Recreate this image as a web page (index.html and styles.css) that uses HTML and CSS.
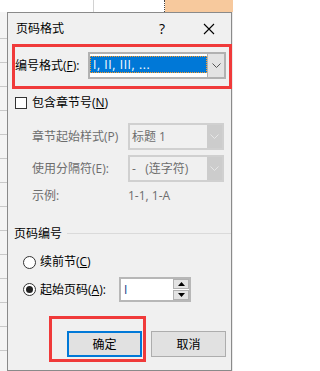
FILE: index.html
```html
<!DOCTYPE html>
<html>
<head>
<meta charset="utf-8">
<title>页码格式</title>
<link rel="stylesheet" href="styles.css">
</head>
<body>
<div class="screen">
  <div class="topstrip">
    <div class="ts-a"></div>
    <div class="ts-b"></div>
    <div class="ts-c"></div>
  </div>
  <div class="main">
    <div class="leftstrip"></div>
    <div class="dialog">
      <div class="titlebar">
        <span class="title">页码格式</span>
        <span class="help">?</span>
        <span class="close">
          <svg width="12" height="12" viewBox="0 0 12 12"><path d="M1 1L11 11M11 1L1 11" stroke="#000" stroke-width="1.1" fill="none"/></svg>
        </span>
      </div>

      <div class="fmt-row">
        <span class="fmt-label">编号格式(<u>F</u>):</span>
        <div class="combo combo-active">
          <div class="combo-field"><span class="sel">I, II, III, ...</span></div>
          <div class="combo-btn">
            <svg width="9" height="5" viewBox="0 0 9 5"><path d="M0.5 0.5L4.5 4.5L8.5 0.5" stroke="#555" stroke-width="1" fill="none"/></svg>
          </div>
        </div>
      </div>

      <div class="check-row">
        <span class="checkbox"></span>
        <span class="txt">包含章节号(<u>N</u>)</span>
      </div>

      <div class="sub-row sub-first">
        <span class="dis">章节起始样式(P)</span>
        <div class="combo combo-dis">
          <div class="combo-field"><span class="dis-val">标题 1</span></div>
          <div class="combo-btn">
            <svg width="9" height="5" viewBox="0 0 9 5"><path d="M0.5 0.5L4.5 4.5L8.5 0.5" stroke="#e6e6e6" stroke-width="1" fill="none"/></svg>
          </div>
        </div>
      </div>

      <div class="sub-row sub-second">
        <span class="dis">使用分隔符(E):</span>
        <div class="combo combo-dis">
          <div class="combo-field"><span class="dis-val">-&nbsp;&nbsp;&nbsp;(连字符)</span></div>
          <div class="combo-btn">
            <svg width="9" height="5" viewBox="0 0 9 5"><path d="M0.5 0.5L4.5 4.5L8.5 0.5" stroke="#e6e6e6" stroke-width="1" fill="none"/></svg>
          </div>
        </div>
      </div>

      <div class="sub-row example-row">
        <span class="dis">示例:</span>
        <span class="dis">1-1, 1-A</span>
      </div>

      <div class="group-head">
        <span class="txt">页码编号</span>
        <span class="group-line"></span>
      </div>

      <div class="radio-row radio-first">
        <span class="radio"></span>
        <span class="txt">续前节(<u>C</u>)</span>
      </div>

      <div class="radio-row radio-second">
        <span class="radio radio-on"><span class="dot"></span></span>
        <span class="txt start-label">起始页码(<u>A</u>):</span>
        <div class="spin">
          <span class="spin-val">I</span>
          <div class="spin-btns">
            <span class="spin-btn">
              <svg width="7" height="4" viewBox="0 0 7 4"><path d="M0 4L3.5 0L7 4Z" fill="#000"/></svg>
            </span>
            <span class="spin-btn">
              <svg width="7" height="4" viewBox="0 0 7 4"><path d="M0 0L3.5 4L7 0Z" fill="#000"/></svg>
            </span>
          </div>
        </div>
      </div>

      <div class="btn-row">
        <button class="btn btn-default">确定</button>
        <button class="btn">取消</button>
      </div>

      <div class="mark mark-format"></div>
      <div class="mark mark-ok"></div>
    </div>
    <div class="rightstrip"></div>
  </div>
</div>
</body>
</html>
```

FILE: styles.css
```css
html, body {
  margin: 0;
  padding: 0;
}

body {
  width: 233px;
  height: 371px;
  overflow: hidden;
  background: #ffffff;
  font-family: "Open Sans", "Noto Sans CJK SC", sans-serif;
  font-size: 12px;
  line-height: 16px;
  color: #000;
}

.screen {
  width: 233px;
  height: 371px;
  display: flex;
  flex-direction: column;
}

/* background document fragments */
.topstrip {
  height: 12px;
  display: flex;
  flex: none;
}
.ts-a {
  width: 93px;
  background: #ffffff;
  border-right: 1px solid #d2d2d2;
}
.ts-b {
  width: 70px;
  background: #ffffff;
  border-right: 1px dotted #444;
}
.ts-c {
  flex: 1;
  background: #f7c99d;
}

.main {
  flex: 1;
  display: flex;
}

.leftstrip {
  width: 7px;
  flex: none;
  background:
    repeating-linear-gradient(to bottom, transparent 0, transparent 23px, #c9c9c9 23px, #c9c9c9 24px) 0 3px / 100% 100% no-repeat,
    #f4f4f4;
}

.rightstrip {
  width: 1px;
  flex: none;
  background: #eaeaea;
}

/* dialog */
.dialog {
  position: relative;
  width: 225px;
  height: 359px;
  box-sizing: border-box;
  border: 1px solid #8a8a8a;
  background: #f0f0f0;
  display: flex;
  flex-direction: column;
}

.titlebar {
  height: 31px;
  display: flex;
  align-items: center;
  padding-left: 8px;
  flex: none;
}
.title {
  flex: 1;
  font-size: 12px;
}
.help {
  width: 12px;
  text-align: center;
  font-size: 14px;
  margin-right: 35px;
}
.close {
  width: 12px;
  height: 12px;
  margin-right: 16px;
  display: flex;
}

u {
  text-decoration: underline;
  text-underline-offset: 1px;
}

.txt {
  white-space: nowrap;
}

/* number format row */
.fmt-row {
  margin-top: 8px;
  height: 27px;
  display: flex;
  align-items: center;
  padding-left: 7px;
  flex: none;
}
.fmt-label {
  width: 73px;
  white-space: nowrap;
}

.combo {
  display: flex;
  box-sizing: border-box;
  height: 27px;
}
.combo-active {
  width: 138px;
  border: 2px solid #b1b1b1;
  background: #fff;
}
.combo-field {
  flex: 1;
  display: flex;
  align-items: center;
  min-width: 0;
}
.sel {
  width: 118px;
  height: 17px;
  box-sizing: border-box;
  margin-top: -2px;
  background: #0078d7;
  border: 1px dotted #ff9b24;
  color: #fff;
  line-height: 15px;
  padding-left: 2px;
  letter-spacing: 0.6px;
  white-space: nowrap;
}
.combo-btn {
  width: 16px;
  flex: none;
  display: flex;
  align-items: center;
  justify-content: center;
}
.combo-active .combo-btn {
  background: #e3e3e3;
  border-left: 1px solid #b1b1b1;
}

/* checkbox */
.check-row {
  margin-top: 16px;
  height: 16px;
  display: flex;
  align-items: center;
  gap: 5px;
  padding-left: 7px;
  flex: none;
}
.checkbox {
  width: 12px;
  height: 12px;
  box-sizing: border-box;
  border: 1px solid #333;
  background: #fff;
}

/* disabled sub-options */
.sub-row {
  display: grid;
  grid-template-columns: 96px 96px;
  align-items: center;
  padding-left: 24px;
  flex: none;
}
.sub-first {
  margin-top: 12px;
  height: 27px;
}
.sub-second {
  margin-top: 5px;
  height: 27px;
}
.example-row {
  margin-top: 6px;
  height: 16px;
}
.dis {
  color: #6d6d6d;
  white-space: nowrap;
}
.combo-dis {
  width: 96px;
  border: 2px solid #d0d0d0;
  background: #f0f0f0;
}
.combo-dis .combo-btn {
  background: #cccccc;
  width: 15px;
}
.dis-val {
  color: #6d6d6d;
  padding-left: 2px;
  white-space: nowrap;
}

/* group */
.group-head {
  margin-top: 22px;
  height: 16px;
  display: flex;
  align-items: center;
  gap: 5px;
  padding-left: 6px;
  flex: none;
}
.group-line {
  flex: 1;
  height: 1px;
  background: #dadada;
  margin-top: -2px;
}

/* radios */
.radio-row {
  display: flex;
  align-items: center;
  padding-left: 15px;
  flex: none;
}
.radio-first {
  margin-top: 12px;
  height: 16px;
}
.radio-second {
  margin-top: 7px;
  height: 25px;
}
.radio {
  width: 13px;
  height: 13px;
  box-sizing: border-box;
  border: 1px solid #333;
  border-radius: 50%;
  background: #fff;
  margin-right: 4px;
  display: flex;
  align-items: center;
  justify-content: center;
  flex: none;
}
.dot {
  width: 7px;
  height: 7px;
  border-radius: 50%;
  background: #222;
}
.start-label {
  width: 79px;
}

.spin {
  width: 72px;
  height: 25px;
  box-sizing: border-box;
  border: 2px solid #b7b7b7;
  background: #fff;
  display: flex;
  align-items: center;
}
.spin-val {
  flex: 1;
  padding-left: 3px;
  color: #1a3f8a;
  font-size: 12px;
}
.spin-btns {
  width: 16px;
  display: flex;
  flex-direction: column;
  gap: 1px;
  align-self: stretch;
  padding: 0 0 0 0;
}
.spin-btn {
  flex: 1;
  background: #e3e3e3;
  border: 1px solid #b1b1b1;
  display: flex;
  align-items: center;
  justify-content: center;
}

/* buttons */
.btn-row {
  margin-top: 29px;
  display: flex;
  justify-content: flex-end;
  gap: 9px;
  padding-right: 5px;
  flex: none;
}
.btn {
  width: 75px;
  height: 26px;
  box-sizing: border-box;
  border: 1px solid #adadad;
  background: #e1e1e1;
  font-family: "Open Sans", "Noto Sans CJK SC", sans-serif;
  font-size: 12px;
  color: #000;
  padding: 0;
  margin: 0;
}
.btn-default {
  border: 2px solid #0078d7;
}

/* red annotation frames laid over the dialog */
.mark {
  position: absolute;
  box-sizing: border-box;
  border: 3px solid #f03a3a;
}
.mark-format {
  left: 4px;
  top: 31px;
  width: 220px;
  height: 45px;
}
.mark-ok {
  left: 41px;
  top: 303px;
  width: 97px;
  height: 46px;
}
```
